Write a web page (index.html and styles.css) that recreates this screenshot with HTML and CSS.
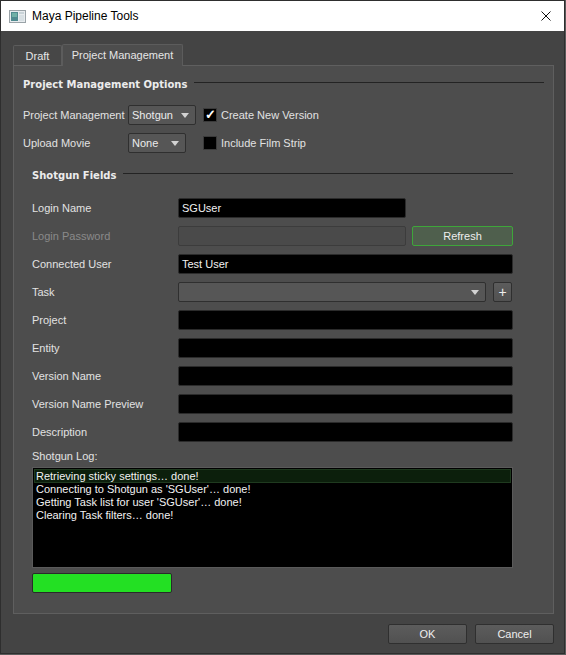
FILE: index.html
```html
<!DOCTYPE html>
<html>
<head>
    <meta charset="UTF-8">
    <title>Maya Pipeline Tools</title>
    <link rel="stylesheet" href="styles.css">
</head>
<body>
    <div class="window">
        <div class="titlebar">
            <svg class="app-icon" width="17" height="13" viewBox="0 0 17 13">
                <rect x="0.5" y="0.5" width="16" height="12" fill="#e8ecef" stroke="#9aa3a8"/>
                <rect x="2" y="2" width="7" height="9" fill="#4f8a8f"/>
                <rect x="3" y="3" width="5" height="4" fill="#6fb0a6"/>
                <rect x="10" y="2" width="5" height="2" fill="#c9d3d8"/>
                <rect x="10" y="5" width="5" height="6" fill="#d8e0e4"/>
            </svg>
            <span class="title">Maya Pipeline Tools</span>
            <svg class="close" width="10" height="10" viewBox="0 0 10 10">
                <path d="M0.5 0.5 L9.5 9.5 M9.5 0.5 L0.5 9.5" stroke="#111" stroke-width="1"/>
            </svg>
        </div>

        <div class="dialog">
            <div class="tabs">
                <div class="tab">Draft</div>
                <div class="tab active">Project Management</div>
            </div>
            <div class="pane">
                <div class="heading"><span>Project Management Options</span><i></i></div>

                <div class="opt-row">
                    <span class="opt-label">Project Management</span>
                    <div class="combo-cell"><div class="combo combo-sg">Shotgun<b class="arrow"></b></div></div>
                    <div class="check on">&#10003;</div>
                    <span>Create New Version</span>
                </div>
                <div class="opt-row">
                    <span class="opt-label">Upload Movie</span>
                    <div class="combo-cell"><div class="combo combo-none">None<b class="arrow"></b></div></div>
                    <div class="check"></div>
                    <span>Include Film Strip</span>
                </div>

                <div class="group">
                    <div class="heading sub"><span>Shotgun Fields</span><i></i></div>

                    <div class="fields">
                        <span>Login Name</span>
                        <div class="split"><div class="field">SGUser</div><div class="gap-btn"></div></div>

                        <span class="disabled">Login Password</span>
                        <div class="split"><div class="field off"></div><div class="btn refresh">Refresh</div></div>

                        <span>Connected User</span>
                        <div class="field">Test User</div>

                        <span>Task</span>
                        <div class="split">
                            <div class="combo wide"><b class="arrow"></b></div>
                            <div class="btn plus">+</div>
                        </div>

                        <span>Project</span>
                        <div class="field"></div>

                        <span>Entity</span>
                        <div class="field"></div>

                        <span>Version Name</span>
                        <div class="field"></div>

                        <span>Version Name Preview</span>
                        <div class="field"></div>

                        <span>Description</span>
                        <div class="field"></div>
                    </div>

                    <div class="log-label">Shotgun Log:</div>
                    <div class="log">
                        <div class="log-line sel">Retrieving sticky settings… done!</div>
                        <div class="log-line">Connecting to Shotgun as 'SGUser'… done!</div>
                        <div class="log-line">Getting Task list for user 'SGUser'… done!</div>
                        <div class="log-line">Clearing Task filters… done!</div>
                    </div>
                    <div class="progress"></div>
                </div>
            </div>

            <div class="footer">
                <div class="btn wide-btn">OK</div>
                <div class="btn wide-btn">Cancel</div>
            </div>
        </div>
    </div>
</body>
</html>
```

FILE: styles.css
```css
* { margin: 0; padding: 0; box-sizing: border-box; }
body {
    background: #5a5a5a;
    font-family: "Liberation Sans", Arial, sans-serif;
    font-size: 11px;
    color: #e2e2e2;
}
.window {
    width: 565px;
    height: 654px;
    border: 1px solid #2e2e2e;
    background: #444444;
}
.titlebar {
    height: 30px;
    background: #ffffff;
    display: flex;
    align-items: center;
    padding: 0 11px 0 8px;
}
.app-icon { margin-right: 6px; margin-top: 1px; }
.title {
    font-family: "Liberation Sans", Arial, sans-serif;
    font-size: 12px;
    color: #000;
    flex: 1;
}
.close { margin-right: 2px; }

.dialog {
    padding: 12px 10px 0 12px;
}
.tabs {
    display: flex;
    align-items: flex-end;
    height: 22px;
}
.tab {
    height: 20px;
    width: 49px;
    padding-top: 4px;
    text-align: center;
    background: #474747;
    border: 1px solid #5c5c5c;
    border-bottom: none;
    border-radius: 2px 2px 0 0;
    color: #e6e6e6;
    font-size: 11px;
}
.tab.active {
    height: 22px;
    width: 121px;
    background: #4d4d4d;
    padding-top: 4px;
    margin-bottom: -1px;
    position: relative;
    z-index: 1;
}
.pane {
    height: 549px;
    border: 1px solid #5f5f5f;
    background: #4d4d4d;
    padding: 10px 9px 0 9px;
}
.heading {
    display: flex;
    align-items: center;
    height: 16px;
    font-family: "DejaVu Sans", sans-serif;
    font-weight: bold;
    font-size: 10px;
    color: #ececec;
}
.heading i {
    flex: 1;
    height: 1px;
    margin-left: 7px;
    margin-top: -3px;
    background: #232323;
}
.opt-row {
    display: flex;
    align-items: center;
    height: 20px;
    margin-top: 13px;
}
.opt-row + .opt-row { margin-top: 8px; }
.opt-label { width: 105px; }
.combo-cell { width: 75px; }
.combo {
    height: 20px;
    display: flex;
    align-items: center;
    padding-left: 3px;
    background: #565656;
    border: 1px solid #2f2f2f;
    border-radius: 2px;
    color: #ececec;
    font-size: 11px;
    position: relative;
}
.combo-sg { width: 68px; }
.combo-none { width: 58px; }
.arrow {
    position: absolute;
    right: 6px;
    top: 7px;
    width: 0;
    height: 0;
    border-left: 4px solid transparent;
    border-right: 4px solid transparent;
    border-top: 5px solid #d2d2d2;
}
.check {
    width: 14px;
    height: 14px;
    margin-right: 4px;
    background: #000;
    border: 1px solid #3a3a3a;
    color: #fff;
    font-size: 13px;
    line-height: 12px;
    text-align: center;
    font-weight: bold;
}

.group {
    margin: 14px 31px 0 9px;
}
.heading.sub i { margin-left: 7px; }
.fields {
    display: grid;
    grid-template-columns: 146px 1fr;
    grid-auto-rows: 20px;
    row-gap: 8px;
    align-items: center;
    margin-top: 15px;
}
.disabled { color: #8a8a8a; }
.split {
    display: flex;
    height: 20px;
}
.split .field { width: 228px; }
.gap-btn { flex: 1; }
.field {
    height: 20px;
    background: #000;
    border: 1px solid #2b2b2b;
    border-radius: 2px;
    padding-left: 3px;
    line-height: 18px;
    color: #f2f2f2;
    font-size: 11px;
}
.field.off {
    background: #4a4a4a;
    border-color: #3c3c3c;
}
.btn {
    height: 20px;
    display: flex;
    align-items: center;
    justify-content: center;
    background: linear-gradient(#5c5c5c, #515151);
    border: 1px solid #2f2f2f;
    border-radius: 2px;
    color: #eeeeee;
    font-size: 11px;
}
.refresh {
    flex: 1;
    margin-left: 6px;
    background: #4f5f4d;
    border: 1px solid #3ea63a;
}
.combo.wide { width: 308px; }
.plus {
    width: 19px;
    margin-left: 7px;
    font-size: 14px;
}
.log-label {
    margin-top: 7px;
    height: 14px;
    line-height: 14px;
}
.log {
    margin-top: 4px;
    height: 101px;
    background: #000;
    border: 1px solid #5a5a5a;
    padding: 1px;
}
.log-line {
    height: 13px;
    line-height: 13px;
    padding-left: 2px;
    color: #f2f2f2;
    font-size: 11px;
}
.log-line.sel {
    background: #0c1f0c;
    border: 1px solid #1f3a1f;
    height: 14px;
    line-height: 12px;
    padding-left: 1px;
}
.progress {
    margin-top: 5px;
    width: 140px;
    height: 20px;
    background: #23e023;
    border: 1px solid #2a2a2a;
    border-radius: 2px;
}
.footer {
    display: flex;
    justify-content: flex-end;
    gap: 8px;
    margin-top: 10px;
}
.wide-btn { width: 79px; }
```
